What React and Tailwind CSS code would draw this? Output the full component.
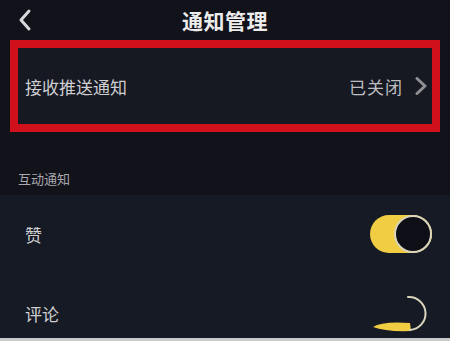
export default function App() {
  const font = { fontFamily: '"Noto Sans CJK SC", "Noto Sans", sans-serif' };
  return (
    <div className="w-[450px] h-[341px] overflow-hidden bg-[#12121a] flex flex-col" style={font}>
      {/* Header */}
      <div className="relative h-[40px] flex items-center justify-center shrink-0">
        <svg className="absolute left-[16px] top-[8px]" width="18" height="24" viewBox="0 0 18 24">
          <path d="M13 3 L5 12 L13 21" fill="none" stroke="#d8d8dc" strokeWidth="3" strokeLinecap="round" strokeLinejoin="round" />
        </svg>
        <span className="text-[21px] font-semibold text-[#ececec] leading-none tracking-[0.5px]">通知管理</span>
      </div>

      {/* Highlighted row */}
      <div className="px-[10px] shrink-0">
        <div className="h-[92px] border-[8px] border-[#d0101b] bg-[#161922] flex items-center justify-between pl-[7px] pr-[3px]">
          <span className="text-[17px] text-[#cfcfd2] leading-none">接收推送通知</span>
          <div className="flex items-center gap-[9px]">
            <span className="text-[17px] text-[#bdbdc0] leading-none tracking-[1px]">已关闭</span>
            <svg width="17" height="18" viewBox="0 0 17 18">
              <path d="M5 1.5 L13 9 L5 16.5" fill="none" stroke="#8e8e93" strokeWidth="3" strokeLinecap="round" strokeLinejoin="round" />
            </svg>
          </div>
        </div>
      </div>

      {/* Section header */}
      <div className="h-[63px] shrink-0 flex items-end pb-[10px] pl-[18px]">
        <span className="text-[13px] text-[#a8a8ae] leading-none">互动通知</span>
      </div>

      {/* List */}
      <div className="h-[143px] shrink-0 bg-[#161a24] flex flex-col">
        <div className="h-[80px] flex items-center justify-between pl-[25px] pr-[18px] pb-[2px]">
          <span className="text-[17px] text-[#cfcfd2] leading-none">赞</span>
          <div className="w-[62px] h-[38px] rounded-full bg-[#f1cd43] flex items-center justify-end">
            <div className="w-[38px] h-[38px] rounded-full bg-[#0d0e16] border-[2px] border-[#d9d5bd]" />
          </div>
        </div>
        <div className="flex-1 flex items-center justify-between pl-[25px] pr-[18px] pt-[14px]">
          <span className="text-[17px] text-[#cfcfd2] leading-none">评论</span>
          <svg width="62" height="40" viewBox="0 0 62 40">
            <path d="M3 33 Q12 27 40 29 L41 37 Q16 38 3 33 Z" fill="#f1cd43" />
            <path d="M38 3 A16 16 0 0 1 40 36" fill="none" stroke="#d9d5bd" strokeWidth="2" strokeLinecap="round" />
          </svg>
        </div>
      </div>
      <div className="h-[3px] shrink-0 bg-[#c9c9cc]" />
    </div>
  );
}
